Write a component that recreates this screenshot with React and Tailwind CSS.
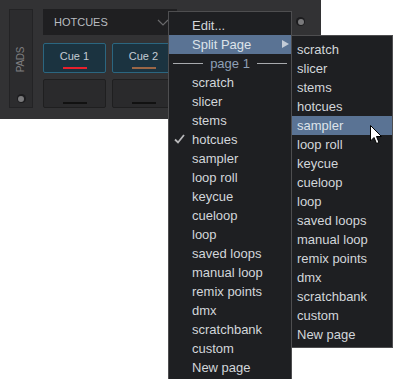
import React from 'react';

const mainItems = [
    'scratch', 'slicer', 'stems', 'hotcues', 'sampler', 'loop roll', 'keycue', 'cueloop', 'loop',
    'saved loops', 'manual loop', 'remix points', 'dmx', 'scratchbank', 'custom', 'New page',
];

const font = { fontFamily: '"Liberation Sans", Arial, sans-serif' };

function Dot() {
    return (
        <div className="w-[9px] h-[9px] rounded-full bg-[#1c1c1e] flex items-center justify-center">
            <div className="w-[6px] h-[6px] rounded-full bg-[#7a7a7c]" />
        </div>
    );
}

function Pad({ label, bar }) {
    if (label) {
        return (
            <div className="w-[63px] h-[30px] bg-[#1b3340] border border-[#2b6680] rounded-[2px] flex flex-col items-center pt-[6px]">
                <span className="text-[11px] leading-[13px] text-[#c4ccd4]">{label}</span>
                <div className={`w-[24px] h-[2px] mt-[4px] ${bar}`} />
            </div>
        );
    }
    return (
        <div className="w-[63px] h-[29px] bg-[#2a2a2c] border border-[#1f1f20] rounded-[2px] flex flex-col items-center justify-end pb-[3px]">
            <div className="w-[24px] h-[2px] bg-[#111]" />
        </div>
    );
}

export default function App() {
    return (
        <div className="relative w-[394px] h-[379px] bg-white overflow-hidden" style={font}>
            {/* deck panel */}
            <div className="w-[321px] h-[119px] bg-[#323234] flex pt-[9px] pl-[9px]">
                <div className="w-[24px] h-[99px] bg-[#2c2c2e] border border-[#232325] flex flex-col items-center">
                    <div className="h-[84px] pt-[15px] flex items-center justify-center">
                        <span className="-rotate-90 text-[10px] tracking-[-0.2px] text-[#7e7e80]">PADS</span>
                    </div>
                    <Dot />
                </div>
                <div className="ml-[10px] flex flex-col">
                    <div className="w-[134px] h-[26px] bg-[#1f1f21] flex items-center justify-between pl-[11px] pr-[8px]">
                        <span className="text-[11px] text-[#b8bcc0]">HOTCUES</span>
                        <svg width="12" height="7" viewBox="0 0 12 7">
                            <path d="M1 1 L6 6 L11 1" fill="none" stroke="#6a6a6c" strokeWidth="1.2" />
                        </svg>
                    </div>
                    <div className="flex gap-[6px] mt-[8px]">
                        <Pad label="Cue 1" bar="bg-[#e8202c]" />
                        <Pad label="Cue 2" bar="bg-[#9a6646]" />
                    </div>
                    <div className="flex gap-[6px] mt-[6px]">
                        <Pad />
                        <Pad />
                    </div>
                </div>
                <div className="ml-auto mr-[16px] mt-[8px]">
                    <Dot />
                </div>
            </div>

            {/* context menu */}
            <div className="absolute left-[168px] top-[11px] w-[124px] h-[380px] bg-[#1e1f22] border border-[#4e4e50] pt-[4px] text-[13px] text-[#d2d6da]">
                <div className="h-[19px] flex items-center pl-[23px]">Edit...</div>
                <div className="h-[19px] flex items-center pl-[23px] bg-[#5a7394] text-[#dde3ea] relative">
                    Split Page
                    <svg className="absolute right-[2px] top-[5px]" width="7" height="8" viewBox="0 0 7 8">
                        <path d="M0 0 L7 4 L0 8 Z" fill="#c4ccd8" />
                    </svg>
                </div>
                <div className="h-[19px] flex items-center px-[4px] gap-[7px]">
                    <div className="flex-1 h-px bg-[#a8aaae]" />
                    <span className="text-[#8ea0b6]">page 1</span>
                    <div className="flex-1 h-px bg-[#a8aaae]" />
                </div>
                {mainItems.map((item) => (
                    <div key={item} className="h-[19px] flex items-center pl-[23px] relative">
                        {item === 'hotcues' && (
                            <svg className="absolute left-[5px] top-[4px]" width="11" height="10" viewBox="0 0 11 10">
                                <path d="M1 5.5 L4 8.5 L10 1" fill="none" stroke="#b8b8ba" strokeWidth="1.8" />
                            </svg>
                        )}
                        {item}
                    </div>
                ))}
            </div>

            {/* submenu */}
            <div className="absolute left-[291px] top-[35px] w-[102px] bg-[#1e1f22] border border-[#4e4e50] pt-[4px] pb-[3px] text-[13px] text-[#d2d6da]">
                {mainItems.map((item) => (
                    <div
                        key={item}
                        className={`h-[19px] flex items-center pl-[5px] ${item === 'sampler' ? 'bg-[#5a7394] text-[#dde3ea]' : ''}`}
                    >
                        {item}
                    </div>
                ))}
            </div>

            {/* mouse pointer */}
            <svg className="absolute left-[370px] top-[125px]" width="13" height="20" viewBox="0 0 13 20">
                <path d="M0.5 0.5 L0.5 16 L4 12.5 L6.5 18.5 L9 17.5 L6.5 11.5 L11.5 11.5 Z" fill="#ffffff" stroke="#000000" strokeWidth="1" strokeLinejoin="round" />
            </svg>
        </div>
    );
}
